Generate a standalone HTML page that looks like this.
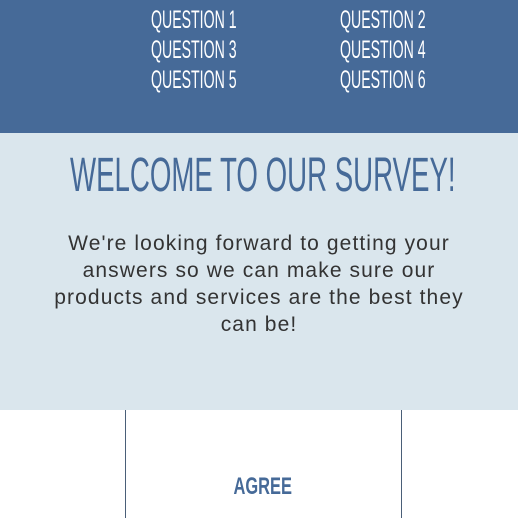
<!DOCTYPE html>
<html><head><style>
html,body{margin:0;padding:0;width:518px;height:518px;overflow:hidden;background:#fff}
.hdr{position:absolute;left:0;top:0;width:518px;height:133px;background:#466a98}
.q{position:absolute;color:#fff;font-family:"Liberation Sans",sans-serif;font-size:25px;line-height:30px;white-space:nowrap;transform:scaleX(0.565);transform-origin:left top}
.sec{position:absolute;left:0;top:133px;width:518px;height:277px;background:#dae6ed}
.t{position:absolute;left:70px;top:150px;color:#466a98;font-family:"Liberation Sans",sans-serif;font-size:48px;line-height:52px;white-space:nowrap;transform:scaleX(0.576);transform-origin:left top}
.p{position:absolute;left:0;top:230px;width:518px;text-align:center;font-family:"Liberation Sans",sans-serif;font-size:21px;line-height:27px;color:#333;letter-spacing:1.1px}
.l{position:absolute;top:410px;width:1px;height:108px;background:#4a5f78}
.a{position:absolute;left:0;top:472px;width:526px;text-align:center}
.a span{display:inline-block;color:#466a98;font-weight:bold;font-family:"Liberation Sans",sans-serif;font-size:24px;line-height:30px;transform:scaleX(0.685)}
</style></head><body>
<div class="hdr"></div>
<div class="q" style="left:151px;top:5px">QUESTION 1</div>
<div class="q" style="left:340px;top:5px">QUESTION 2</div>
<div class="q" style="left:151px;top:35px">QUESTION 3</div>
<div class="q" style="left:340px;top:35px">QUESTION 4</div>
<div class="q" style="left:151px;top:65px">QUESTION 5</div>
<div class="q" style="left:340px;top:65px">QUESTION 6</div>
<div class="sec"></div>
<div class="t">WELCOME TO OUR SURVEY!</div>
<div class="p">We're looking forward to getting your<br>answers so we can make sure our<br>products and services are the best they<br>can be!</div>
<div class="l" style="left:125px"></div>
<div class="l" style="left:401px"></div>
<div class="a"><span>AGREE</span></div>
</body></html>
